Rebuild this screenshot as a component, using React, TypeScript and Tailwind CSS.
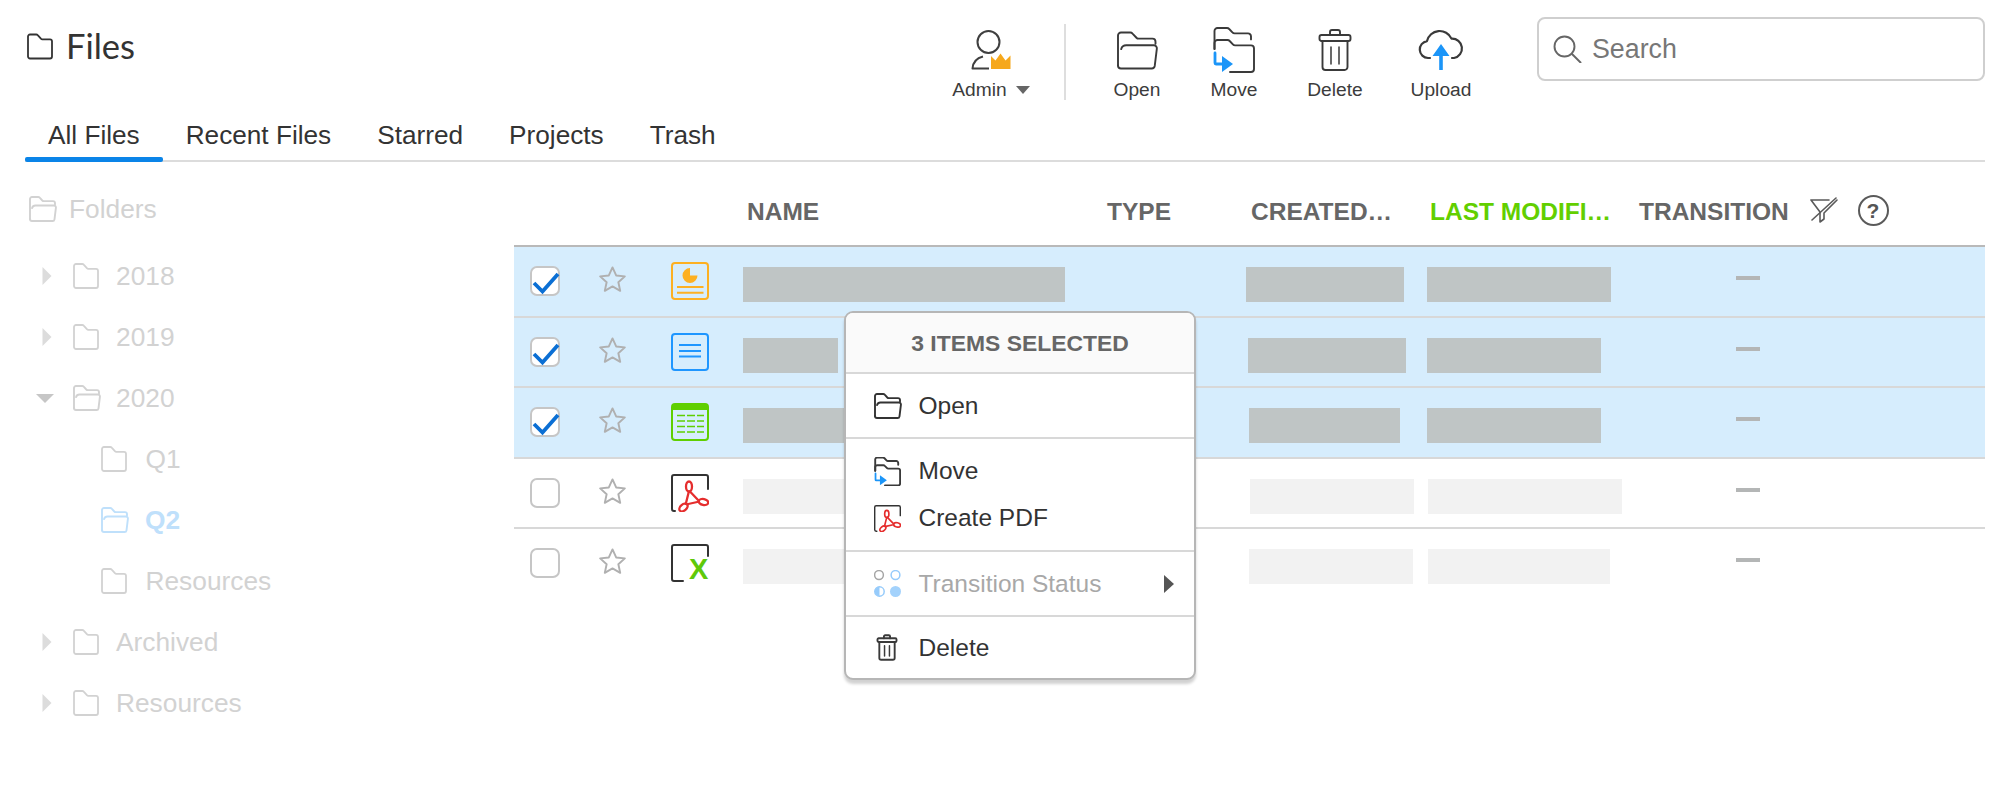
import React from "react";

const ARIAL = "font-['Liberation_Sans',Arial,sans-serif]";

function FolderClosed({ className = "" }: { className?: string }) {
  return (
    <svg viewBox="0 0 26 26" className={className} fill="none" stroke="currentColor" strokeWidth="1.8" strokeLinejoin="round" strokeLinecap="round">
      <path d="M1 3a2 2 0 0 1 2-2h6.2a2 2 0 0 1 1.5.7l3.2 3.5a2 2 0 0 0 1.5.6H23a2 2 0 0 1 2 2V23a2 2 0 0 1-2 2H3a2 2 0 0 1-2-2z" />
    </svg>
  );
}

function FolderOpen({ className = "" }: { className?: string }) {
  return (
    <svg viewBox="0 0 28 26" className={className} fill="none" stroke="currentColor" strokeWidth="1.9" strokeLinejoin="round" strokeLinecap="round">
      <path vectorEffect="non-scaling-stroke" d="M1 23V3a2 2 0 0 1 2-2h6.200a2 2 0 0 1 1.500.7l2.600 2.800a2 2 0 0 0 1.500.6H24a2 2 0 0 1 2 2v1.400" />
      <path vectorEffect="non-scaling-stroke" d="M1 23a2 2 0 0 0 2 2h20.500a2 2 0 0 0 2-1.700l1.400-11.500a2 2 0 0 0-2-2.300H6.500a3.500 3.500 0 0 0-3.400 2.600" />
    </svg>
  );
}

function MoveIcon({ className = "" }: { className?: string }) {
  return (
    <svg viewBox="0 0 42 46" className={className} fill="none" strokeLinejoin="round" strokeLinecap="round">
      <g stroke="#3a3a3a" strokeWidth="1.900">
        <path vectorEffect="non-scaling-stroke" d="M1.500 22V4a3 3 0 0 1 3-3h9.500a3 3 0 0 1 2.200 1l3.200 3.400a3 3 0 0 0 2.200 1H35a3 3 0 0 1 3 3v3" />
        <path vectorEffect="non-scaling-stroke" d="M1.500 22v-6a3 3 0 0 1 3-3h10a3 3 0 0 1 2.200 1l3.200 3.400a3 3 0 0 0 2.200 1H38a3 3 0 0 1 3 3V42a3 3 0 0 1-3 3H17" />
      </g>
      <path d="M2 26v10a1 1 0 0 0 1 1h9" stroke="#1b95f8" strokeWidth="2.800" />
      <path d="M9 29l11 8-11 8z" fill="#1b95f8" />
    </svg>
  );
}

function TrashIcon({ className = "" }: { className?: string }) {
  return (
    <svg viewBox="0 0 34 44" className={className} fill="none" stroke="#3a3a3a" strokeWidth="1.900" strokeLinejoin="round" strokeLinecap="round">
      <path vectorEffect="non-scaling-stroke" d="M12 7V4a2 2 0 0 1 2-2h6a2 2 0 0 1 2 2v3" />
      <rect vectorEffect="non-scaling-stroke" x="1.500" y="7" width="31" height="6" rx="2" />
      <path vectorEffect="non-scaling-stroke" d="M4.500 13v26a3 3 0 0 0 3 3h19a3 3 0 0 0 3-3V13" />
      <path vectorEffect="non-scaling-stroke" d="M13 19v17M21 19v17" strokeWidth="1.500" />
    </svg>
  );
}

function UploadIcon({ className = "" }: { className?: string }) {
  return (
    <svg viewBox="0 0 46 42" className={className} fill="none">
      <path d="M12 29H10A8.500 8.500 0 0 1 9 12.100 13 13 0 0 1 33.500 9.600 9.800 9.800 0 0 1 36 29h-2" stroke="#3a3a3a" strokeWidth="2.200" strokeLinecap="round" strokeLinejoin="round" />
      <path d="M23 15l8.500 12h-6.700v14h-3.600V27h-6.700z" fill="#1b95f8" />
    </svg>
  );
}

function AdminIcon({ className = "" }: { className?: string }) {
  return (
    <svg viewBox="0 0 40 40" className={className} fill="none">
      <circle cx="17.500" cy="12" r="11" stroke="#3f3f3f" strokeWidth="2" />
      <path d="M12 26.500C6 28 2 32 1.500 38.500H18" stroke="#3f3f3f" strokeWidth="2" strokeLinejoin="round" />
      <path d="M20 39V26l4.500 4.500L29.500 23.500l5 7L39.500 25.500V39z" fill="#f6a81c" />
    </svg>
  );
}

function SearchIcon() {
  return (
    <svg viewBox="0 0 29 28" className="w-[29px] h-[28px]" fill="none" stroke="#666" strokeWidth="1.900" strokeLinecap="round">
      <circle cx="11.500" cy="11.500" r="10" />
      <path d="M19 19l8.500 8.500" />
    </svg>
  );
}

function FilterIcon() {
  return (
    <svg viewBox="0 0 30 26" className="w-[30px] h-[26px]" fill="none" stroke="#5a5a5a" strokeWidth="1.600" strokeLinejoin="round" strokeLinecap="round">
      <path d="M1 3h18M1 3l9 12v10l4-3v-6l13-13" />
      <path d="M2 23L26 1" />
    </svg>
  );
}

function StarIcon() {
  return (
    <svg viewBox="0 0 28 27" className="w-[27px] h-[26px]" fill="none" stroke="#b0b0b0" strokeWidth="2" strokeLinejoin="round">
      <path d="M14 1.500l3.800 8.300 9 1-6.700 6.100 1.900 8.900L14 21.200l-8 4.600 1.900-8.900-6.700-6.100 9-1z" />
    </svg>
  );
}

function AcrobatMark() {
  return (
    <g stroke="#e52d2d" strokeWidth="2.300" fill="none" strokeLinejoin="round">
      <ellipse cx="18" cy="12.500" rx="3" ry="5" />
      <ellipse cx="12.500" cy="33.500" rx="4.800" ry="3" transform="rotate(-40 12.500 33.500)" />
      <ellipse cx="32.500" cy="28" rx="4.800" ry="3" transform="rotate(12 32.500 28)" />
      <path d="M18 17L14.500 31M18.500 17L28 27M15 30.500L28.500 27.500" />
    </g>
  );
}

function PdfIcon({ className = "" }: { className?: string }) {
  return (
    <svg viewBox="0 0 38 38" className={className} fill="none">
      <path d="M4 37H3a2 2 0 0 1-2-2V3a2 2 0 0 1 2-2h32a2 2 0 0 1 2 2v12" stroke="#333" strokeWidth="2" strokeLinecap="round" />
      <AcrobatMark />
    </svg>
  );
}

function XlsIcon() {
  return (
    <div className="relative w-[38px] h-[38px]">
      <svg viewBox="0 0 38 38" className="w-[38px] h-[38px]" fill="none">
        <path d="M12 37H3a2 2 0 0 1-2-2V3a2 2 0 0 1 2-2h32a2 2 0 0 1 2 2v9" stroke="#333" strokeWidth="2" strokeLinecap="round" />
      </svg>
      <span className={`absolute left-[18px] top-[11px] text-[29px] leading-[29px] font-bold text-[#5fc90a] ${ARIAL}`}>X</span>
    </div>
  );
}

function PptIcon() {
  return (
    <svg viewBox="0 0 38 38" className="w-[38px] h-[38px]" fill="none">
      <rect x="1" y="1" width="36" height="36" rx="3" stroke="#fdb022" strokeWidth="2" />
      <path d="M19 13.500V6A7.500 7.500 0 1 0 26.500 13.500z" fill="#fdb022" />
      <path d="M6 25h26.500M6 30.700h26.500" stroke="#fdb022" strokeWidth="2" />
    </svg>
  );
}

function DocIcon() {
  return (
    <svg viewBox="0 0 38 38" className="w-[38px] h-[38px]" fill="none">
      <rect x="1" y="1" width="36" height="36" rx="3" stroke="#1e96ff" strokeWidth="2" />
      <path d="M8 12h22M8 18h22M8 23.500h22" stroke="#1e96ff" strokeWidth="1.800" />
    </svg>
  );
}

function SheetIcon() {
  return (
    <svg viewBox="0 0 38 38" className="w-[38px] h-[38px]" fill="none">
      <rect x="1" y="1" width="36" height="36" rx="3" stroke="#5fcf00" strokeWidth="2" />
      <path d="M1 6V4a3 3 0 0 1 3-3h30a3 3 0 0 1 3 3v3H1z" fill="#5fcf00" />
      <path d="M6 12.500h8M16 12.500h8M26 12.500h7M6 18h8M16 18h8M26 18h7M6 23.500h8M16 23.500h8M26 23.500h7M6 29h8M16 29h8M26 29h7" stroke="#5fcf00" strokeWidth="1.600" />
    </svg>
  );
}

function StatusIcon() {
  return (
    <svg viewBox="0 0 27 27" className="w-[27px] h-[27px]" fill="none">
      <circle cx="5" cy="5" r="4.400" stroke="#a6a6a6" strokeWidth="1.500" />
      <circle cx="21.500" cy="5" r="4.400" stroke="#96cbfb" strokeWidth="1.500" />
      <circle cx="5.500" cy="21.500" r="4.700" stroke="#96cbfb" strokeWidth="1.500" />
      <path d="M5.500 16.800a4.700 4.700 0 0 0 0 9.400z" fill="#96cbfb" />
      <circle cx="21.500" cy="21.500" r="5.500" fill="#a3d2fc" />
    </svg>
  );
}

function Check({ on }: { on: boolean }) {
  return (
    <div className="w-[30px] h-[30px] mt-[19px] rounded-[7px] border-2 border-[#c6c6c6] bg-white relative">
      {on && (
        <svg viewBox="0 0 30 30" className="absolute -left-[2px] -top-[2px] w-[30px] h-[30px]" fill="none">
          <path d="M4 17l8.500 8.500L28 8" stroke="#0b6fd4" strokeWidth="3.800" />
        </svg>
      )}
    </div>
  );
}

function Tool({ width, margin, icon, label, caret }: { width: string; margin: string; icon: React.ReactNode; label: string; caret?: boolean }) {
  return (
    <div className={`flex flex-col items-center ${width} ${margin}`}>
      <div className="h-[50px] mt-[25px] flex items-center justify-center">{icon}</div>
      <div className="h-[24px] mt-[3px] flex items-center text-[19.200px] leading-[24px] text-[#3c3c3c] whitespace-nowrap">
        {label}
        {caret && <span className="ml-[9px] w-0 h-0 border-x-[7.500px] border-x-transparent border-t-[8px] border-t-[#666]" />}
      </div>
    </div>
  );
}

type TreeRow = { label: string; kind: "collapsed" | "open" | "child" | "active" };
const tree: TreeRow[] = [
  { label: "2018", kind: "collapsed" },
  { label: "2019", kind: "collapsed" },
  { label: "2020", kind: "open" },
  { label: "Q1", kind: "child" },
  { label: "Q2", kind: "active" },
  { label: "Resources", kind: "child" },
  { label: "Archived", kind: "collapsed" },
  { label: "Resources", kind: "collapsed" },
];

function Tree({ row }: { row: TreeRow }) {
  if (row.kind === "child" || row.kind === "active") {
    const active = row.kind === "active";
    return (
      <div className={`h-[61px] flex items-center pl-[101px] ${active ? "text-[#bfe0fb] font-bold" : "text-[#d2d2d2]"}`}>
        {active ? <FolderOpen className="w-[28px] h-[26px]" /> : <FolderClosed className="w-[26px] h-[26px]" />}
        <span className={active ? "ml-[16px]" : "ml-[18.500px]"}>{row.label}</span>
      </div>
    );
  }
  const open = row.kind === "open";
  return (
    <div className="h-[61px] flex items-center text-[#d2d2d2]">
      <div className="ml-[36px] w-[18px] flex justify-center">
        {open ? (
          <span className="w-0 h-0 border-x-[9px] border-x-transparent border-t-[9px] border-t-[#c6c6c6]" />
        ) : (
          <span className="w-0 h-0 border-y-[9.500px] border-y-transparent border-l-[9px] border-l-[#dcdcdc] translate-x-[1.500px]" />
        )}
      </div>
      <div className="ml-[19px] w-[26px] flex">
        {open ? <FolderOpen className="w-[28px] h-[26px] shrink-0" /> : <FolderClosed className="w-[26px] h-[26px]" />}
      </div>
      <span className="ml-[17px]">{row.label}</span>
    </div>
  );
}

type Row = {
  on: boolean;
  icon: React.ReactNode;
  name: string;
  created: string;
  modified: string;
  muted: boolean;
  last?: boolean;
};

const rows: Row[] = [
  { on: true, icon: <PptIcon />, name: "w-[322px]", created: "ml-0 w-[158px]", modified: "w-[184px]", muted: false },
  { on: true, icon: <DocIcon />, name: "w-[95px]", created: "ml-[2px] w-[158px]", modified: "w-[174px]", muted: false },
  { on: true, icon: <SheetIcon />, name: "w-[150px]", created: "ml-[3px] w-[151px]", modified: "w-[174px]", muted: false },
  { on: false, icon: <PdfIcon className="w-[38px] h-[38px]" />, name: "w-[150px]", created: "ml-[3.500px] w-[164px]", modified: "ml-[1px] w-[194px]", muted: true },
  { on: false, icon: <XlsIcon />, name: "w-[150px]", created: "ml-[3px] w-[164px]", modified: "ml-[1px] w-[182px]", muted: true, last: true },
];

function FileRow({ row }: { row: Row }) {
  const block = row.muted ? "bg-[#f2f2f2]" : "bg-[#bfc5c5]";
  return (
    <div className={`h-[70.500px] grid grid-cols-[85px_72px_72px_503px_181px_309px_1fr] ${row.last ? "" : "border-b-2 border-[#d8d8d8]"} ${row.on ? "bg-[#d6edfd]" : "bg-white"}`}>
      <div className="pl-[16px]"><Check on={row.on} /></div>
      <div className="pt-[19px]"><StarIcon /></div>
      <div className="pt-[15px]">{row.icon}</div>
      <div className="pt-[20px]"><div className={`h-[35px] ${block} ${row.name}`} /></div>
      <div className="pt-[20px]"><div className={`h-[35px] ${block} ${row.created}`} /></div>
      <div className="pt-[20px]"><div className={`h-[35px] ${block} ${row.modified}`} /></div>
      <div className="pt-[29px]"><div className="h-[4px] w-[24px] bg-[#b4b6b6]" /></div>
    </div>
  );
}

function MenuItem({ icon, label, muted, arrow }: { icon: React.ReactNode; label: string; muted?: boolean; arrow?: boolean }) {
  return (
    <div className={`flex items-center h-full ${muted ? "text-[#a8a8a8]" : "text-[#333]"}`}>
      <div className="ml-[28px] w-[44.500px] flex items-center">{icon}</div>
      <span>{label}</span>
      {arrow && <span className="ml-auto mr-[20px] w-0 h-0 border-y-[9.500px] border-y-transparent border-l-[10px] border-l-[#555]" />}
    </div>
  );
}

export default function App() {
  return (
    <div className={`relative w-[2000px] h-[790px] bg-white overflow-hidden ${ARIAL}`}>
      <header className="flex h-[115px] pl-[27px]">
        <div className="flex items-center h-[38px] mt-[27px] text-[#333]">
          <FolderClosed className="w-[26px] h-[27px]" />
          <span className="ml-[13px] text-[34.500px] leading-[38px] font-['Lato',sans-serif]">Files</span>
        </div>
        <div className="ml-auto flex items-start pr-[15px]">
          <Tool width="w-[84px]" margin="" icon={<AdminIcon className="w-[40px] h-[40px]" />} label="Admin" caret />
          <div className="ml-[31px] mt-[24px] w-[2px] h-[76px] bg-[#dedede]" />
          <Tool width="w-[60px]" margin="ml-[41px]" icon={<FolderOpen className="w-[47px] h-[39px] text-[#3a3a3a]" />} label="Open" />
          <Tool width="w-[60px]" margin="ml-[37px]" icon={<MoveIcon className="w-[42px] h-[46px]" />} label="Move" />
          <Tool width="w-[60px]" margin="ml-[41px]" icon={<TrashIcon className="w-[34px] h-[44px]" />} label="Delete" />
          <Tool width="w-[70px]" margin="ml-[41px]" icon={<UploadIcon className="w-[46px] h-[42px]" />} label="Upload" />
          <div className="ml-[61px] mt-[17px] w-[448px] h-[64px] rounded-[8px] border-2 border-[#cfcfcf] flex items-center pl-[14px]">
            <SearchIcon />
            <span className="ml-[10px] mt-[1px] text-[26.800px] text-[#777]">Search</span>
          </div>
        </div>
      </header>

      <nav className="ml-[25px] mr-[15px] h-[47px] flex border-b-2 border-[#dcdcdc] text-[26.200px] text-[#333]">
        {["All Files", "Recent Files", "Starred", "Projects", "Trash"].map((t, i) => (
          <div key={t} className="flex flex-col h-[47px] shrink-0">
            <div className="h-[42px] px-[23px] leading-[40px] whitespace-nowrap">{t}</div>
            {i === 0 && <div className="h-[5px] rounded-[2px] bg-[#0a84e8]" />}
          </div>
        ))}
      </nav>

      <div className="flex">
        <aside className="w-[514px] shrink-0 pt-[16.500px] text-[26.300px] leading-[30px]">
          <div className="h-[61px] flex items-center pl-[29px] text-[#d2d2d2]">
            <FolderOpen className="w-[28px] h-[26px]" />
            <span className="ml-[12px]">Folders</span>
          </div>
          <div className="mt-[6px]">
            {tree.map((r, i) => (
              <Tree key={i} row={r} />
            ))}
          </div>
        </aside>

        <section className="w-[1471px]">
          <div className="h-[85px] border-b-2 border-[#b9b9b9] flex pt-[33px] pl-[233px] text-[24.500px] leading-[34px] font-bold text-[#666]">
            <div className="w-[360px]">NAME</div>
            <div className="w-[144px]">TYPE</div>
            <div className="w-[179px]">CREATED…</div>
            <div className="w-[209px] text-[#62cf00]">LAST MODIFI…</div>
            <div className="w-[171px]">TRANSITION</div>
            <div className="w-[47.500px] pt-[2px]"><FilterIcon /></div>
            <div className="w-[31px] h-[31px] rounded-full border-2 border-[#5a5a5a] flex items-center justify-center text-[21px] leading-none text-[#555]">?</div>
          </div>
          {rows.map((r, i) => (
            <FileRow key={i} row={r} />
          ))}
        </section>
      </div>

      <div className="absolute left-[844px] top-[311px] w-[352px] h-[369px] rounded-[9px] border-2 border-[#b6b6b6] bg-white shadow-[0_4px_3px_rgba(0,0,0,0.18)] text-[24.500px] leading-[30px] overflow-hidden">
        <div className="h-[61px] bg-[#fafafa] border-b-2 border-[#d8d8d8] flex items-center justify-center text-[22.900px] font-bold text-[#666]">3 ITEMS SELECTED</div>
        <div className="h-[65px] border-b-2 border-[#d8d8d8]">
          <MenuItem icon={<FolderOpen className="w-[28px] h-[26px] text-[#333]" />} label="Open" />
        </div>
        <div className="h-[113px] border-b-2 border-[#d8d8d8] py-[8.500px]">
          <div className="h-[47px]"><MenuItem icon={<MoveIcon className="w-[27px] h-[29px]" />} label="Move" /></div>
          <div className="h-[47px]"><MenuItem icon={<PdfIcon className="w-[27px] h-[27px]" />} label="Create PDF" /></div>
        </div>
        <div className="h-[65px] border-b-2 border-[#d8d8d8]">
          <MenuItem icon={<StatusIcon />} label="Transition Status" muted arrow />
        </div>
        <div className="h-[61px]">
          <MenuItem icon={<TrashIcon className="w-[22px] h-[27px] ml-[2px]" />} label="Delete" />
        </div>
      </div>
    </div>
  );
}
